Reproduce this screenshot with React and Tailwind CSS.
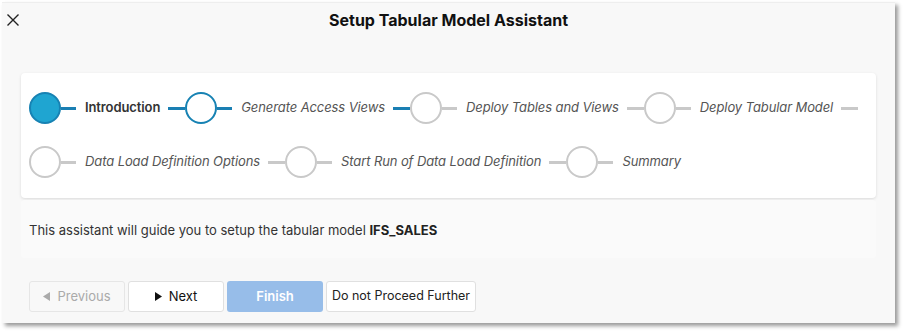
const steps = [
  { label: 'Introduction', state: 'active' },
  { label: 'Generate Access Views', state: 'next' },
  { label: 'Deploy Tables and Views', state: 'todo' },
  { label: 'Deploy Tabular Model', state: 'todo' },
  { label: 'Data Load Definition Options', state: 'todo' },
  { label: 'Start Run of Data Load Definition', state: 'todo' },
  { label: 'Summary', state: 'todo' },
];

function Step({ step, last }) {
  const blue = step.state !== 'todo';
  const circle =
    step.state === 'active'
      ? 'bg-[#1fa5d1] border-[#1782b3]'
      : step.state === 'next'
      ? 'bg-white border-[#1782b3]'
      : 'bg-white border-[#c9c9c9]';
  const line = blue ? 'bg-[#1a7fb3]' : 'bg-[#c9c9c9]';

  return (
    <div className="flex items-center">
      <div className={`w-[32px] h-[32px] rounded-full border-2 ${circle}`} />
      <div className={`w-[15px] h-[3px] ${line}`} />
      <span
        className={`ml-[9px] mr-[8px] text-[13px] tracking-[-0.1px] ${
          step.state === 'active' ? 'font-semibold text-[#333]' : 'italic text-[#555]'
        }`}
      >
        {step.label}
      </span>
      {!last && <div className={`w-[17px] h-[3px] ${line}`} />}
    </div>
  );
}

function Triangle({ dir, color }) {
  return (
    <svg width="7" height="9" viewBox="0 0 7 9">
      <path d={dir === 'left' ? 'M7 0 L0 4.5 L7 9 Z' : 'M0 0 L7 4.5 L0 9 Z'} fill={color} />
    </svg>
  );
}

export default function App() {
  return (
    <div className="w-[904px] h-[332px] bg-white pt-[2px] pl-[2px]" style={{ fontFamily: 'Inter, "Noto Sans", sans-serif' }}>
      <div className="w-[893px] h-[321px] bg-[#f8f8f8] border-t border-[#eeeeee] shadow-[3px_3px_4px_rgba(0,0,0,0.4)] flex flex-col">

        <div className="relative h-[33px] flex items-center justify-center">
          <svg className="absolute left-[4px] top-[10px]" width="14" height="14" viewBox="0 0 14 14">
            <path d="M1.5 1.5 L12.5 12.5 M12.5 1.5 L1.5 12.5" stroke="#222" strokeWidth="1.4" />
          </svg>
          <h1 className="text-[16px] font-bold text-[#111]">Setup Tabular Model Assistant</h1>
        </div>

        <div className="mt-[37px] mx-[19px] bg-white rounded-[4px] shadow-[0_1px_3px_rgba(0,0,0,0.12)] pl-[8px] pt-[19px] pb-[20px] flex flex-wrap gap-y-[22px]">
          {steps.map((s, i) => (
            <Step key={s.label} step={s} last={i === steps.length - 1} />
          ))}
        </div>

        <div className="mx-[19px] mt-[2px] h-[58px] bg-[#fafafa] rounded-[4px] flex items-center pl-[8px] pt-[3px]">
          <p className="text-[13px] text-[#333]">
            This assistant will guide you to setup the tabular model <span className="font-bold text-[#222]">IFS_SALES</span>
          </p>
        </div>

        <div className="mt-[23px] ml-[27px] flex gap-[3px]">
          <button className="w-[96px] h-[31px] rounded-[3px] border border-[#e6e6e6] bg-[#f8f8f8] text-[13px] text-[#aaa] flex items-center justify-center gap-[7px]">
            <Triangle dir="left" color="#aaa" />Previous
          </button>
          <button className="w-[96px] h-[31px] rounded-[3px] border border-[#e0e0e0] bg-white text-[13px] text-[#111] flex items-center justify-center gap-[7px]">
            <Triangle dir="right" color="#111" />Next
          </button>
          <button className="w-[96px] h-[31px] rounded-[3px] bg-[#97bde9] text-[13px] font-semibold text-white">
            Finish
          </button>
          <button className="w-[150px] h-[31px] rounded-[3px] border border-[#e0e0e0] bg-white text-[12.5px] text-[#222]">
            Do not Proceed Further
          </button>
        </div>

      </div>
    </div>
  );
}
